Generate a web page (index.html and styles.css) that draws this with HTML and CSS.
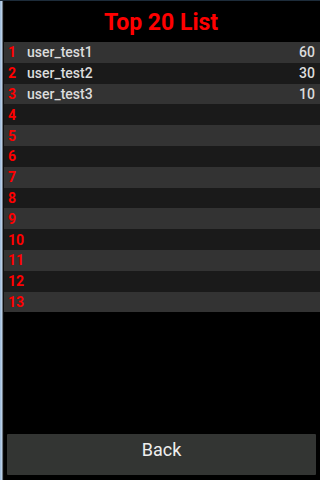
FILE: index.html
```html
<!DOCTYPE html>
<html lang="en">
<head>
    <meta charset="UTF-8">
    <meta name="viewport" content="width=device-width, initial-scale=1.0">
    <title>Top 20 List</title>
    <link rel="stylesheet" href="styles.css">
</head>
<body>
    <div class="screen">
        <h1 class="title">Top 20 List</h1>

        <!-- ranking list -->
        <ul class="ranking">
            <li class="row"><span class="rank">1</span><span class="name">user_test1</span><span class="score">60</span></li>
            <li class="row"><span class="rank">2</span><span class="name">user_test2</span><span class="score">30</span></li>
            <li class="row"><span class="rank">3</span><span class="name">user_test3</span><span class="score">10</span></li>
            <li class="row"><span class="rank">4</span></li>
            <li class="row"><span class="rank">5</span></li>
            <li class="row"><span class="rank">6</span></li>
            <li class="row"><span class="rank">7</span></li>
            <li class="row"><span class="rank">8</span></li>
            <li class="row"><span class="rank">9</span></li>
            <li class="row"><span class="rank">10</span></li>
            <li class="row"><span class="rank">11</span></li>
            <li class="row"><span class="rank">12</span></li>
            <li class="row"><span class="rank">13</span></li>
        </ul>

        <div class="footer">
            <button class="back-btn">Back</button>
        </div>
    </div>
</body>
</html>
```

FILE: styles.css
```css
/* page */
html, body {
    margin: 0;
    padding: 0;
    height: 100%;
}

body {
    font-family: Roboto, "Liberation Sans", sans-serif;
    background-color: #000;
    color: #ddd;
}

.screen {
    height: 480px;
    box-sizing: border-box;
    display: flex;
    flex-direction: column;
    padding-left: 4px;
    border-top: 1px solid #1d2c3a;
    /* light edge on the left side */
    background: linear-gradient(to right, #9ab8d8 0, #c4d8ee 2px, #1a1a1a 3px, #000 4px);
}

/* title */
.title {
    margin: 0;
    height: 41px;
    line-height: 43px;
    text-align: center;
    font-size: 23px;
    font-weight: 700;
    color: #f00;
    background-color: #000;
    padding-right: 2px;
    overflow: hidden;
}

/* list */
.ranking {
    list-style: none;
    margin: 0;
    padding: 0;
    display: grid;
    grid-template-rows: repeat(13, 20.8px);
}

.row {
    display: flex;
    align-items: center;
    padding: 0 5px 0 4px;
    font-size: 14px;
    background-color: #1a1a1a;
}

.row:nth-child(odd) {
    background-color: #333;
}

.rank {
    width: 19px;
    font-weight: 700;
    color: #f00;
}

.name {
    flex: 1;
    font-weight: 500;
    color: #dcdcdc;
}

.score {
    font-weight: 500;
    color: #dcdcdc;
}

/* bottom button */
.footer {
    margin-top: auto;
    padding: 0 4px 5px 3px;
    background-color: #000;
}

.back-btn {
    display: block;
    width: 100%;
    height: 41px;
    border: none;
    border-radius: 1px;
    background-color: #333533;
    color: #eee;
    font-family: Roboto, "Liberation Sans", sans-serif;
    font-size: 18px;
    padding: 0 0 10px;
}
```
